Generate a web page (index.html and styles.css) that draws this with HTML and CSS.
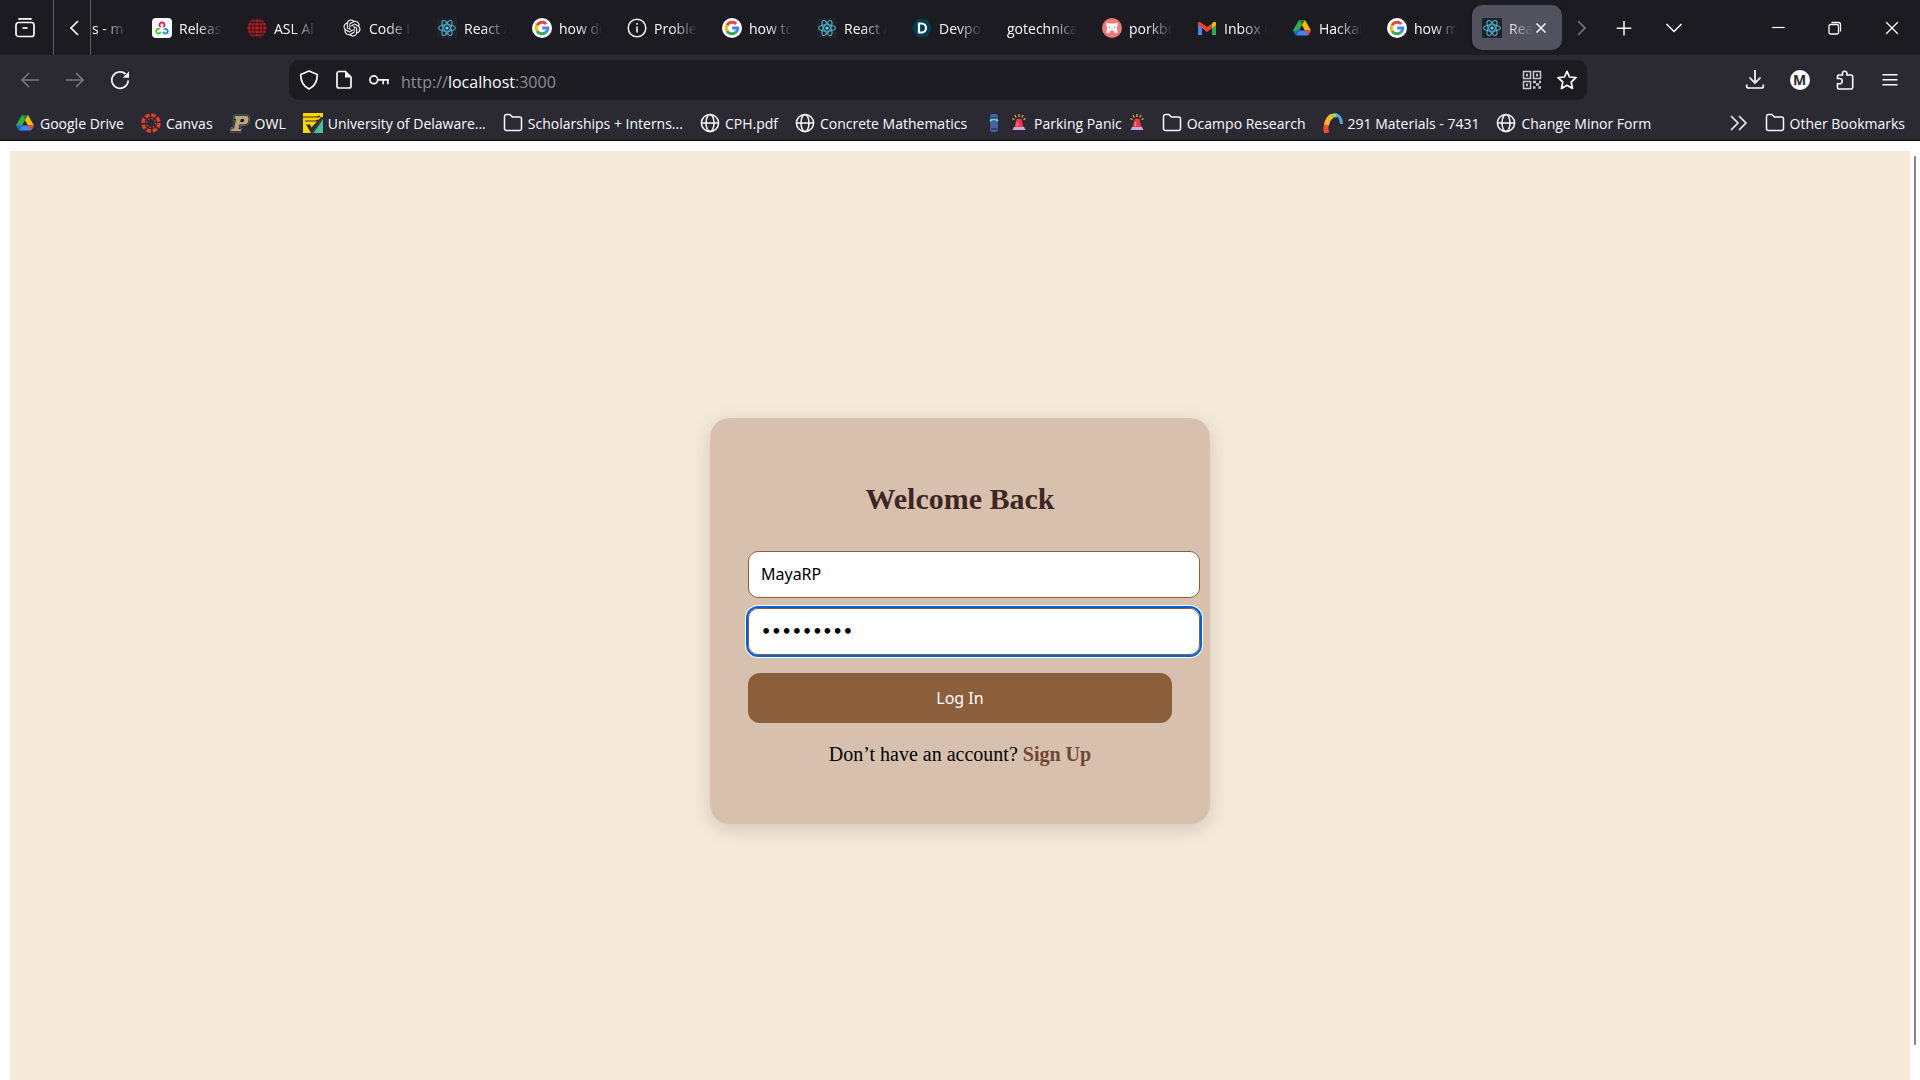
FILE: index.html
```html
<!DOCTYPE html>
<html lang="en">
<head>
    <meta charset="UTF-8">
    <meta name="viewport" content="width=device-width, initial-scale=1.0">
    <title>React App</title>
    <link rel="stylesheet" href="styles.css">
</head>
<body>
    <!-- shared icons -->
    <svg class="sprite" aria-hidden="true">
        <symbol id="react" viewBox="0 0 20 20">
            <rect width="20" height="20" rx="1" fill="#20232a"/>
            <circle cx="10" cy="10" r="1.6" fill="#61dafb"/>
            <g fill="none" stroke="#4fb3cf" stroke-width="1.1">
                <ellipse cx="10" cy="10" rx="8.4" ry="3.3"/>
                <ellipse cx="10" cy="10" rx="8.4" ry="3.3" transform="rotate(60 10 10)"/>
                <ellipse cx="10" cy="10" rx="8.4" ry="3.3" transform="rotate(120 10 10)"/>
            </g>
        </symbol>
        <symbol id="google" viewBox="0 0 20 20">
            <circle cx="10" cy="10" r="10" fill="#fff"/>
            <g fill="none" stroke-width="2.9">
                <path d="M14.2 5.9A5.8 5.8 0 0 0 5 7.2" stroke="#ea4335"/>
                <path d="M5 7.2A5.8 5.8 0 0 0 5 12.9" stroke="#fbbc05"/>
                <path d="M5 12.9A5.8 5.8 0 0 0 13.8 14.4" stroke="#34a853"/>
                <path d="M13.8 14.4A5.8 5.8 0 0 0 15.8 10H10.2" stroke="#4285f4"/>
            </g>
        </symbol>
        <symbol id="drive" viewBox="0 0 20 20">
            <path d="M7 2h6L7 12.5 4 17 1 12.200z" fill="#34a853"/>
            <path d="M7 2h6l6 10.500h-6z" fill="#fbbc04"/>
            <path d="M7 2h6l-3 5.200z" fill="#188038"/>
            <path d="M6.900 12.500H19L16 17.500H4z" fill="#4285f4"/>
            <path d="M1 12.500h6L4 17.500z" fill="#1967d2"/>
            <path d="M13 12.500h6L16 17.500z" fill="#ea4335"/>
        </symbol>
        <symbol id="folder" viewBox="0 0 20 20">
            <path d="M1.500 15.500V3.500a2 2 0 0 1 2-2h3.300l2.600 2.500h7.100a2 2 0 0 1 2 2v9.500a2 2 0 0 1-2 2h-13a2 2 0 0 1-2-2z" fill="none" stroke="currentColor" stroke-width="1.500"/>
        </symbol>
        <symbol id="globe" viewBox="0 0 20 20">
            <g fill="none" stroke="currentColor" stroke-width="1.500">
                <circle cx="10" cy="10" r="8.600"/>
                <ellipse cx="10" cy="10" rx="4" ry="8.600"/>
                <path d="M1.400 10h17.200"/>
            </g>
        </symbol>
        <symbol id="siren" viewBox="0 0 16 20">
            <path d="M3.500 14l1.500-5.500a3 3 0 0 1 6 0l1.500 5.500z" fill="#f0364f"/>
            <path d="M6.500 13V9" stroke="#ff8c95" stroke-width="1.500"/>
            <path d="M3 14h10l1.500 3h-13z" fill="#c9a8dd"/>
            <path d="M8 1v3M4 2l1.200 2.500M12 2l-1.200 2.500M1.500 5.500l2 1.200M14.500 5.500l-2 1.200" stroke="#f2b632" stroke-width="1.200"/>
        </symbol>
    </svg>

    <header class="browser">
        <div class="tab-bar">
            <button class="icon-btn view-btn" aria-label="Firefox View">
                <svg class="icon" viewBox="0 0 20 20" fill="none" stroke="currentColor" stroke-width="1.700">
                    <path d="M3.500 1.500Q4 .8 5 .8h10q1 0 1.500.7"/>
                    <rect x="1" y="4.500" width="18" height="14" rx="2.500"/>
                    <path d="M7.500 10h5"/>
                </svg>
            </button>
            <button class="icon-btn scroll-left" aria-label="Scroll tabs left">
                <svg class="icon" viewBox="0 0 20 20" fill="none" stroke="currentColor" stroke-width="1.700"><path d="M14 3l-7 7 7 7"/></svg>
            </button>
            <nav class="tabs">
                <a href="#" class="tab tab-cut"><span class="tab-title">s - m</span></a>
                <a href="#" class="tab">
                    <svg class="icon" viewBox="0 0 20 20">
                        <rect width="20" height="20" rx="4" fill="#fff"/>
                        <g fill="none" stroke-width="1.800">
                            <path d="M8.600 9a2.500 2.500 0 1 1 2.800 0" stroke="#f04"/>
                            <path d="M7.800 11.300a2.300 2.300 0 1 0 .9 2.500" stroke="#4c2"/>
                            <path d="M12.200 11.300a2.300 2.300 0 1 1-1 2.500" stroke="#08f"/>
                        </g>
                    </svg>
                    <span class="tab-title">Releas</span>
                </a>
                <a href="#" class="tab">
                    <svg class="icon" viewBox="0 0 20 20" fill="none" stroke="#1c1b22">
                        <circle cx="10" cy="10" r="9.500" fill="#c4161c" stroke="none"/>
                        <ellipse cx="10" cy="10" rx="6" ry="9.500"/>
                        <ellipse cx="10" cy="10" rx="2.500" ry="9.500"/>
                        <path d="M0 4.500h20M0 8h20M0 12h20M0 15.500h20"/>
                    </svg>
                    <span class="tab-title">ASL Al</span>
                </a>
                <a href="#" class="tab">
                    <svg class="icon" viewBox="-2 -2 28 28" fill="currentColor">
                        <path d="M22.282 9.821a5.985 5.985 0 0 0-.516-4.910 6.046 6.046 0 0 0-6.510-2.900A6.065 6.065 0 0 0 4.981 4.182a5.985 5.985 0 0 0-3.998 2.900 6.046 6.046 0 0 0 .743 7.097 5.980 5.980 0 0 0 .510 4.911 6.051 6.051 0 0 0 6.515 2.900A5.985 5.985 0 0 0 13.260 24a6.056 6.056 0 0 0 5.772-4.206 5.990 5.990 0 0 0 3.998-2.900 6.056 6.056 0 0 0-.748-7.073zM13.260 22.430a4.476 4.476 0 0 1-2.876-1.040l.141-.081 4.779-2.758a.795.795 0 0 0 .393-.681v-6.737l2.020 1.169a.071.071 0 0 1 .038.052v5.583a4.504 4.504 0 0 1-4.495 4.493zM3.600 18.304a4.471 4.471 0 0 1-.535-3.014l.142.085 4.783 2.759a.771.771 0 0 0 .781 0l5.843-3.369v2.332a.080.080 0 0 1-.033.062L9.740 19.950a4.500 4.500 0 0 1-6.140-1.646zM2.340 7.896a4.485 4.485 0 0 1 2.366-1.973V11.600a.766.766 0 0 0 .388.677l5.815 3.354-2.020 1.169a.076.076 0 0 1-.071 0l-4.830-2.787A4.504 4.504 0 0 1 2.340 7.872zm16.597 3.855l-5.833-3.387L15.119 7.200a.076.076 0 0 1 .071 0l4.830 2.791a4.494 4.494 0 0 1-.676 8.105v-5.678a.790.790 0 0 0-.407-.667zm2.010-3.023l-.141-.085-4.774-2.782a.776.776 0 0 0-.785 0L9.409 9.230V6.897a.066.066 0 0 1 .028-.061l4.830-2.787a4.500 4.500 0 0 1 6.680 4.660zM8.307 12.863l-2.020-1.164a.080.080 0 0 1-.038-.057V6.075a4.500 4.500 0 0 1 7.375-3.453l-.142.081-4.778 2.758a.795.795 0 0 0-.393.681zm1.097-2.365l2.602-1.500 2.607 1.500v2.999l-2.597 1.500-2.607-1.500z"/>
                    </svg>
                    <span class="tab-title">Code I</span>
                </a>
                <a href="#" class="tab"><svg class="icon"><use href="#react"/></svg><span class="tab-title">React A</span></a>
                <a href="#" class="tab"><svg class="icon"><use href="#google"/></svg><span class="tab-title">how do</span></a>
                <a href="#" class="tab">
                    <svg class="icon" viewBox="0 0 20 20" fill="none" stroke="currentColor" stroke-width="1.500">
                        <circle cx="10" cy="10" r="8.800"/>
                        <path d="M10 8.500v6M10 5v1.800"/>
                    </svg>
                    <span class="tab-title">Proble</span>
                </a>
                <a href="#" class="tab"><svg class="icon"><use href="#google"/></svg><span class="tab-title">how to</span></a>
                <a href="#" class="tab"><svg class="icon"><use href="#react"/></svg><span class="tab-title">React A</span></a>
                <a href="#" class="tab">
                    <svg class="icon" viewBox="0 0 20 20">
                        <path d="M5 1h10l5 9-5 9H5l-5-9z" fill="#003e54"/>
                        <path d="M7 5.500h2.500a4.500 4.500 0 0 1 0 9H7z" fill="none" stroke="#fff" stroke-width="2.200"/>
                    </svg>
                    <span class="tab-title">Devpo</span>
                </a>
                <a href="#" class="tab"><span class="tab-title">gotechnica</span></a>
                <a href="#" class="tab">
                    <svg class="icon" viewBox="0 0 20 20">
                        <circle cx="10" cy="10" r="10" fill="#ef7878"/>
                        <path d="M4.500 4.500l3 1h5l3-1v3l-.5 1.500.5 6h-3v-2h-5v2h-3l.5-6-.5-1.500z" fill="#fff"/>
                        <path d="M7.500 8.500v1.500M12.500 8.500v1.500M9 11h2" stroke="#ef7878"/>
                    </svg>
                    <span class="tab-title">porkbu</span>
                </a>
                <a href="#" class="tab">
                    <svg class="icon" viewBox="0 0 20 20">
                        <path d="M1 5v12h4V8z" fill="#4285f4"/>
                        <path d="M19 5v12h-4V8z" fill="#34a853"/>
                        <path d="M15 5.500L16.800 4Q19 3 19 5.500V7l-4 3.200z" fill="#fbbc04"/>
                        <path d="M1 7V5.500Q1 3 3.200 4L10 9l5-3.500v4.700L10 14 1 7z" fill="#ea4335"/>
                    </svg>
                    <span class="tab-title">Inbox (</span>
                </a>
                <a href="#" class="tab"><svg class="icon"><use href="#drive"/></svg><span class="tab-title">Hackat</span></a>
                <a href="#" class="tab"><svg class="icon"><use href="#google"/></svg><span class="tab-title">how m</span></a>
                <div class="tab tab-active">
                    <svg class="icon"><use href="#react"/></svg>
                    <span class="tab-title">Rea</span>
                    <button class="tab-close" aria-label="Close tab">
                        <svg viewBox="0 0 10 10" stroke="currentColor" stroke-width="1.500"><path d="M.5.5l9 9M9.500.5l-9 9"/></svg>
                    </button>
                </div>
            </nav>
            <button class="icon-btn scroll-right" aria-label="Scroll tabs right" disabled>
                <svg class="icon" viewBox="0 0 20 20" fill="none" stroke="currentColor" stroke-width="1.500"><path d="M7 3l7 7-7 7"/></svg>
            </button>
            <button class="icon-btn" aria-label="New tab">
                <svg class="icon" viewBox="0 0 20 20" stroke="currentColor" stroke-width="1.500"><path d="M10 3v14.500M2.700 10.300h14.600"/></svg>
            </button>
            <button class="icon-btn" aria-label="List all tabs">
                <svg class="icon" viewBox="0 0 20 20" fill="none" stroke="currentColor" stroke-width="1.500"><path d="M2.500 6l7.500 7.500L17.500 6"/></svg>
            </button>
            <div class="window-controls">
                <button class="win-btn" aria-label="Minimize">
                    <svg class="icon" viewBox="0 0 20 20" stroke="currentColor" stroke-width="1.200"><path d="M4 9.500h12.500"/></svg>
                </button>
                <button class="win-btn" aria-label="Restore">
                    <svg class="icon" viewBox="0 0 20 20" fill="none" stroke="currentColor" stroke-width="1.300"><rect x="4" y="6.500" width="9.500" height="9.500" rx="1.500"/><path d="M6.500 4.500h7a2 2 0 0 1 2 2v7"/></svg>
                </button>
                <button class="win-btn" aria-label="Close">
                    <svg class="icon" viewBox="0 0 20 20" stroke="currentColor" stroke-width="1.300"><path d="M4 4l12 12M16 4L4 16"/></svg>
                </button>
            </div>
        </div>

        <div class="nav-bar">
            <button class="icon-btn" aria-label="Back" disabled>
                <svg class="icon" viewBox="0 0 20 20" fill="none" stroke="currentColor" stroke-width="1.500"><path d="M19 10H2M9 3l-7 7 7 7"/></svg>
            </button>
            <button class="icon-btn" aria-label="Forward" disabled>
                <svg class="icon" viewBox="0 0 20 20" fill="none" stroke="currentColor" stroke-width="1.500"><path d="M1 10h17M11 3l7 7-7 7"/></svg>
            </button>
            <button class="icon-btn" aria-label="Reload">
                <svg class="icon" viewBox="0 0 20 20" fill="none" stroke="currentColor" stroke-width="1.700">
                    <path d="M18.200 10.500A8.200 8.200 0 1 1 15.500 4"/>
                    <path d="M19 1.500v6.200h-6.200z" fill="currentColor" stroke="none"/>
                </svg>
            </button>
            <div class="url-bar">
                <svg class="icon" viewBox="0 0 20 20" fill="none" stroke="currentColor" stroke-width="1.700"><path d="M10 1l8.300 3.500c0 6.500-2 11.500-8.300 14.600C3.700 16 1.700 11 1.700 4.500z" stroke-linejoin="round"/></svg>
                <svg class="icon" viewBox="0 0 20 20" fill="none" stroke="currentColor" stroke-width="1.700"><path d="M4.500 1.500h7l5.500 5.500v9a2 2 0 0 1-2 2H5a2 2 0 0 1-2-2V3.500a2 2 0 0 1 1.500-2z"/><path d="M11 1.500V7.500h6z" fill="currentColor" stroke="none"/></svg>
                <svg class="icon" viewBox="0 0 20 20" fill="none" stroke="currentColor" stroke-width="1.700"><circle cx="4.800" cy="9.800" r="3.900"/><path d="M8.700 9.800H20M14.200 9.800v4.400M18.800 9.800v4.400"/></svg>
                <a href="#" class="url">http://<span class="host">localhost</span>:3000</a>
                <button class="url-btn" aria-label="QR code">
                    <svg class="icon" viewBox="0 0 20 20" fill="none" stroke="#c8c7cc" stroke-width="1.500">
                        <path d="M1.500 1.500h7v7h-7zM11.500 1.500h7v7h-7zM1.500 11.500h7v7h-7z"/>
                        <path d="M4 5h2M14 5h2M4 15h2M11 12h3M14 14.500h3M17 12h2M11 17.500h2.500M16.500 17.500h2.500" stroke-width="2.500"/>
                    </svg>
                </button>
                <button class="url-btn" aria-label="Bookmark this page">
                    <svg class="icon" viewBox="0 0 20 20" fill="none" stroke="currentColor" stroke-width="1.700" stroke-linejoin="round"><path d="M10 1.300l2.500 5.700 6.500.7-4.800 4.300 1.300 6.500L10 15.300l-5.500 3.200L5.800 12 1 7.700l6.500-.7z"/></svg>
                </button>
            </div>
            <div class="nav-tools">
                <button class="icon-btn" aria-label="Downloads">
                    <svg class="icon" viewBox="0 0 20 20" fill="none" stroke="currentColor" stroke-width="1.700"><path d="M10 0v12.500M4.500 7.500L10 13l5.500-5.500M1.700 14.500v1.700q0 1.800 2 1.800h12.600q2 0 2-1.800v-1.700"/></svg>
                </button>
                <button class="icon-btn" aria-label="Account"><span class="avatar">M</span></button>
                <button class="icon-btn" aria-label="Extensions">
                    <svg class="icon" viewBox="0 0 20 20" fill="none" stroke="currentColor" stroke-width="1.600"><path d="M2.500 8.500V6.300q0-1.300 1.300-1.300h3.700V3.500a2.200 2.200 0 0 1 4.400 0V5h4.300q1.500 0 1.500 1.500v11q0 1.500-1.500 1.500H4q-1.500 0-1.500-1.500v-3.700h2a2.600 2.600 0 0 0 0-5.300z"/></svg>
                </button>
                <button class="icon-btn" aria-label="Menu">
                    <svg class="icon" viewBox="0 0 20 20" stroke="currentColor" stroke-width="1.500"><path d="M2.500 4.700h15M2.500 9.700h15M2.500 14.700h15"/></svg>
                </button>
            </div>
        </div>

        <nav class="bookmarks">
            <a href="#"><svg class="icon"><use href="#drive"/></svg>Google Drive</a>
            <a href="#">
                <svg class="icon" viewBox="0 0 20 20" fill="none" stroke="#e13f2b">
                    <circle cx="10" cy="10" r="8" stroke-width="3.500" stroke-dasharray="4.500 1.783"/>
                    <circle cx="10" cy="10" r="4.500" stroke-width="1.400" stroke-dasharray="1.400 2.134"/>
                </svg>Canvas
            </a>
            <a href="#">
                <svg class="icon" viewBox="0 0 20 20">
                    <path d="M4 2h14q2 1 1.500 5-.5 5-5 5.500h-4L9.500 15h2l-.8 4H0l1-4.500h2l1.500-7H3z" fill="#111" stroke="#77767c" stroke-width=".8"/>
                    <path d="M5 3h12q2 .5 1.500 4-.5 4.500-4.500 4.500H9.500L8.500 16H11l-.5 2H1l.5-2.500h2.500l2-9.500H4.500zM11 6l-.8 3h2.300q1.300 0 1.600-1.500T13 6z" fill="#b8a678" fill-rule="evenodd"/>
                </svg>OWL
            </a>
            <a href="#">
                <svg class="icon" viewBox="0 0 20 20">
                    <path d="M0 0h20v4L9 20H0z" fill="#ffd500"/>
                    <path d="M0 4h13q3 0 4-1M2 8h10q2 0 3-1" fill="none" stroke="#2b2a33" stroke-width="1.200"/>
                    <path d="M3 11.500h4l1.500 3L18 4h2L9 20H8z" fill="#2b2a33"/>
                    <path d="M20 6v14h-9.500z" fill="#4dbd97"/>
                </svg>University of Delaware...
            </a>
            <a href="#"><svg class="icon"><use href="#folder"/></svg>Scholarships + Interns...</a>
            <a href="#"><svg class="icon"><use href="#globe"/></svg>CPH.pdf</a>
            <a href="#"><svg class="icon"><use href="#globe"/></svg>Concrete Mathematics</a>
            <a href="#" class="parking">
                <svg class="icon" viewBox="0 0 20 20">
                    <rect x="5" y="1" width="10" height="18" rx="2" fill="#1b2440"/>
                    <rect x="6" y="1" width="8" height="18" rx="2" fill="#4a5f9c"/>
                    <path d="M6 8q4-4 8 0" fill="none" stroke="#4fd8dc" stroke-width="2"/>
                    <path d="M7 5h6M7 16h6" stroke="#1b2440"/>
                </svg>
                <svg class="icon icon-siren"><use href="#siren"/></svg>Parking Panic<svg class="icon icon-siren"><use href="#siren"/></svg>
            </a>
            <a href="#"><svg class="icon"><use href="#folder"/></svg>Ocampo Research</a>
            <a href="#">
                <svg class="icon" viewBox="0 0 20 20" fill="none" stroke-width="5">
                    <path d="M3.500 20Q2 13 4.500 8" stroke="#f04e30"/>
                    <path d="M3.500 12Q5 5 9 3" stroke="#fbb62b"/>
                    <path d="M8 3.500Q11 1.500 14 2.500" stroke="#a5cf63" stroke-width="4"/>
                    <path d="M13 2Q18 2.500 18.500 11" stroke="#4fa9e0" stroke-width="3"/>
                </svg>291 Materials - 7431
            </a>
            <a href="#"><svg class="icon"><use href="#globe"/></svg>Change Minor Form</a>
            <div class="bookmarks-end">
                <button class="more-btn" aria-label="Show more bookmarks">
                    <svg class="icon" viewBox="0 0 20 20" fill="none" stroke="currentColor" stroke-width="1.500"><path d="M2 3l7 7-7 7M10 3l7 7-7 7"/></svg>
                </button>
                <a href="#"><svg class="icon"><use href="#folder"/></svg>Other Bookmarks</a>
            </div>
        </nav>
    </header>

    <main class="viewport">
        <div class="login-page">
            <form class="login-card">
                <h2>Welcome Back</h2>
                <input type="text" class="input-field" value="MayaRP" aria-label="Username">
                <input type="password" class="input-field focused" value="password1" aria-label="Password">
                <button type="button" class="login-btn">Log In</button>
                <p>Don’t have an account? <a href="#">Sign Up</a></p>
            </form>
        </div>
        <div class="scroll-thumb"></div>
    </main>
</body>
</html>
```
FILE: styles.css
```css
* {
    box-sizing: border-box;
}

body {
    margin: 0;
    height: 100vh;
    display: flex;
    flex-direction: column;
    overflow: hidden;
    background-color: #fff;
    font-family: "Liberation Serif", "Times New Roman", serif;
    font-size: 20px;
}

.sprite {
    display: none;
}

/* browser chrome */
.browser {
    flex: none;
    background-color: #2b2a33;
    border-bottom: 1px solid #0c0c0d;
    color: #fbfbfe;
    font-family: "Open Sans", "Noto Sans", sans-serif;
    font-size: 14px;
}

.browser a {
    color: inherit;
    text-decoration: none;
}

.browser button {
    display: flex;
    align-items: center;
    justify-content: center;
    padding: 0;
    border: none;
    background: none;
    color: inherit;
    font: inherit;
}

.browser button:disabled {
    color: #7b7a82;
}

.icon {
    flex: none;
    width: 20px;
    height: 20px;
}

.icon-siren {
    width: 16px;
}

.browser .icon-btn {
    flex: none;
    width: 45px;
    height: 40px;
}

.tab-bar {
    display: flex;
    align-items: center;
    height: 55px;
    background-color: #1c1b22;
}

.tab-bar .view-btn {
    width: 54px;
    height: 55px;
    padding-right: 4px;
    border-right: 1px solid #5b5a62;
}

.tab-bar .scroll-left {
    width: 37px;
    height: 55px;
    padding-left: 4px;
    border-right: 1px solid #5b5a62;
}

.tabs {
    display: flex;
    gap: 5px;
    overflow: hidden;
}

.tab {
    flex: none;
    display: flex;
    align-items: center;
    gap: 7px;
    width: 90px;
    height: 45px;
    padding: 0 10px;
    border-radius: 10px;
}

.tab-title {
    flex: 1;
    padding-top: 2px;
    overflow: hidden;
    white-space: nowrap;
    mask-image: linear-gradient(to left, transparent, #000 25px);
}

.tab-cut {
    width: 46px;
    padding-left: 1px;
}

.tab-active {
    padding-right: 16px;
    background-color: #52515e;
    box-shadow: 0 0 4px rgba(0, 0, 0, 0.4);
}

.tab-active .tab-title {
    margin-right: -4px;
}

.tab-close svg {
    width: 10px;
    height: 10px;
}

.tab-bar .scroll-right {
    width: 38px;
    margin-right: 1px;
}

.tab-bar .scroll-right + .icon-btn {
    margin-right: 5px;
}

.window-controls {
    display: flex;
    margin-left: auto;
}

.browser .win-btn {
    width: 57px;
    height: 55px;
}

.nav-bar {
    display: flex;
    align-items: center;
    height: 50px;
    padding: 0 8px 0 7px;
}

.url-bar {
    flex: 1;
    display: flex;
    align-items: center;
    gap: 15px;
    height: 40px;
    margin: 0 145px 0 147px;
    padding: 0 10px;
    border-radius: 10px;
    background-color: #1c1b22;
}

.url {
    flex: 1;
    padding-top: 3px;
    font-size: 16px;
}

.browser .url {
    margin-left: -3px;
    color: #8f8e96;
}

.url .host {
    color: #fbfbfe;
}

.nav-tools {
    display: flex;
}

.avatar {
    width: 20px;
    height: 20px;
    border-radius: 50%;
    background-color: #fbfbfe;
    color: #2b2a33;
    font-size: 14px;
    font-weight: bold;
    line-height: 20px;
    text-align: center;
}

.bookmarks {
    display: flex;
    align-items: center;
    gap: 17px;
    height: 35px;
    padding: 1px 15px 0;
    white-space: nowrap;
}

.bookmarks a {
    display: flex;
    align-items: center;
    gap: 5px;
}

.bookmarks .parking {
    gap: 7px;
}

.bookmarks-end {
    display: flex;
    align-items: center;
    gap: 16px;
    margin-left: auto;
}

/* page */
.viewport {
    flex: 1;
    position: relative;
    min-height: 0;
    overflow: hidden;
}

.login-page {
    display: flex;
    align-items: center;
    justify-content: center;
    height: 100%;
    margin: 10px;
    background-color: #f5e9d9;
}

.login-card {
    width: 500px;
    padding: 38px;
    border-radius: 20px;
    background-color: #d8c0af;
    box-shadow: 0 5px 19px rgba(0, 0, 0, 0.15);
    text-align: center;
}

.login-card h2 {
    margin: 26px 0 35px;
    color: #3e2723;
    font-size: 30px;
    line-height: 34px;
}

.input-field {
    display: block;
    width: calc(100% + 28px);
    height: 47px;
    margin: 10px 0;
    padding: 12px;
    border: 1px solid #8b5e3c;
    border-radius: 10px;
    background-color: #fff;
    color: #000;
    font-family: "Noto Sans", sans-serif;
    font-size: 16px;
}

.input-field[type="password"] {
    font-family: "DejaVu Sans", sans-serif;
    font-weight: bold;
}

.input-field.focused {
    outline: 2px solid #0060df;
    box-shadow: 0 0 0 3px #fff;
}

.login-btn {
    width: 100%;
    height: 50px;
    margin-top: 8px;
    border: none;
    border-radius: 12px;
    background-color: #8b5e3c;
    color: #fff;
    font-family: "Noto Sans", sans-serif;
    font-size: 16px;
    cursor: pointer;
}

.login-card p {
    margin: 20px 0;
    line-height: 23px;
}

.login-card p a {
    color: #6f4731;
    font-weight: bold;
    text-decoration: none;
}

/* overlay scrollbar */
.scroll-thumb {
    position: absolute;
    top: 15px;
    right: 4px;
    bottom: 35px;
    width: 2px;
    border-radius: 1px;
    background-color: #858585;
}
```
